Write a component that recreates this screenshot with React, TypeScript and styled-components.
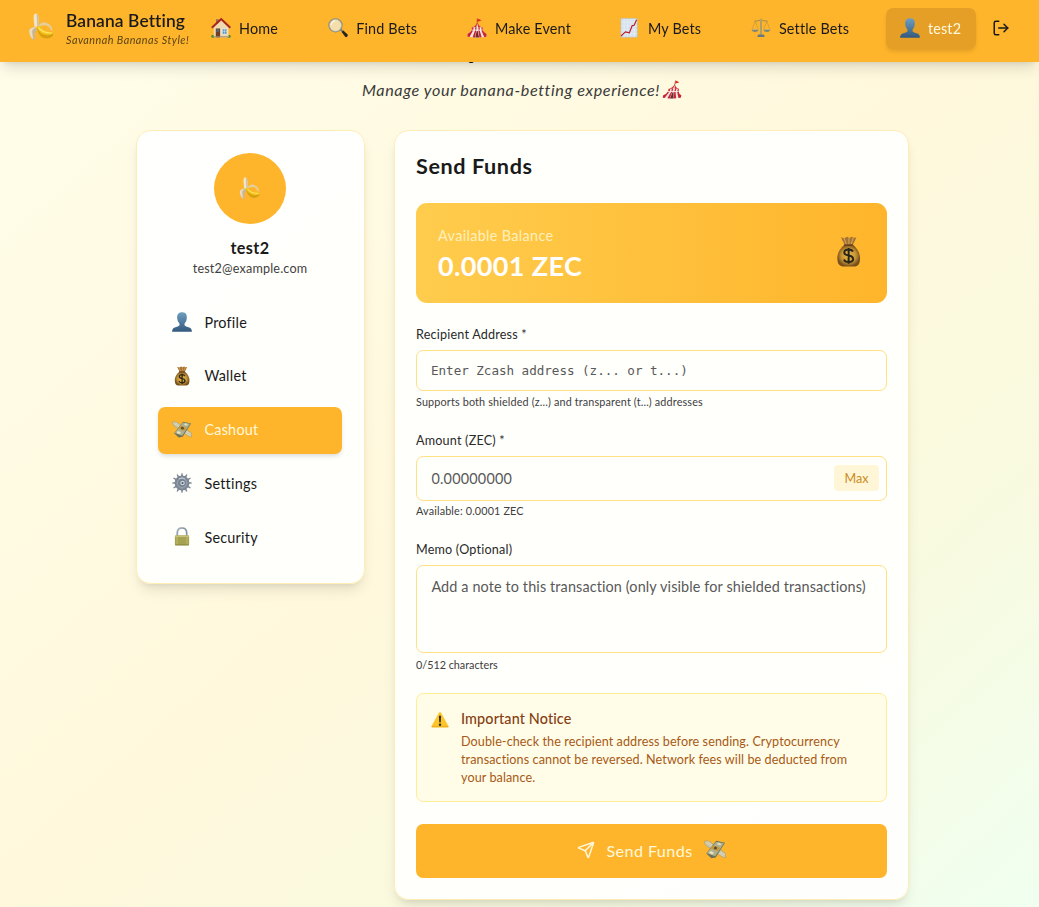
import React from 'react';
import styled, { createGlobalStyle, css } from 'styled-components';
import { LogOut, Send } from 'lucide-react';

const GlobalStyle = createGlobalStyle`
  *, *::before, *::after { box-sizing: border-box; }
  html { font-size: 14.4px; }
  body {
    margin: 0;
    height: 907px;
    overflow: hidden;
    font-family: Lato, 'Open Sans', sans-serif;
    color: #1a1a1a;
    background: linear-gradient(to bottom right, #fffdea 0%, #fff8dc 50%, #f8fae0 76%, #f0fff0 100%);
  }
  h1, h2, h3, p { margin: 0; font-weight: 400; }
  button, input, textarea { font: inherit; }
`;

type EmojiName =
  | 'banana' | 'house' | 'search' | 'tent' | 'chart' | 'scales' | 'person'
  | 'bag' | 'wings' | 'gear' | 'lock' | 'warning';

const EmojiSvg = styled.svg<{ $size: number; $skew?: boolean }>`
  display: block;
  flex: none;
  width: ${(p) => p.$size}px;
  height: ${(p) => p.$size}px;
  overflow: visible;
  ${(p) => p.$skew && css`transform: skewX(-12deg);`}
`;

const teeth = [0, 30, 60, 90, 120, 150, 180, 210, 240, 270, 300, 330];

const drawings: Record<EmojiName, React.ReactNode> = {
  banana: (
    <>
      <path d="M7.2 9.6 Q2.2 10.4 1.6 12.4 Q1.8 17 4.6 19.4 Q5.6 19.6 5.7 17.6 Q5.2 13 8.4 11Z" fill="#cbb595" />
      <path d="M6.8 10 Q3.6 11.4 3.6 13.4 L4.4 18.8 Q1.6 16.4 1.5 12.6 Q2.4 10 6.8 10Z" fill="#eadcbc" />
      <path d="M5.3 9.6 L4.7 3.2 Q4.8 .4 6.3 .3 Q7.9 .5 8.2 3 L8.5 9.4 Q6.8 10.8 5.3 9.6Z" fill="#f0e5c6" />
      <path d="M6.9 .6 Q8 1 8.2 3 L8.5 9.4 L7.3 10Z" fill="#cfc09e" />
      <path d="M8 9.3 Q10.4 6 13.2 6.7 Q17.8 8 18.1 12.3 Q17.6 13.1 17.2 12.4 Q15.6 8.6 12 8.8 Q10 9 8 9.9Z" fill="#e3cf9c" />
      <path d="M6.3 10.2 Q8.6 8.2 10.7 11 Q13.4 13.8 18 13.6 Q19.7 14.5 18.4 16.4 Q15.8 18.9 11.9 17.9 Q7.9 16.3 6.3 10.2Z" fill="#f3c11c" />
      <path d="M7 10.5 Q9 14.8 13.5 15.8 Q16.2 16.2 18.9 14.7 L18.4 16.4 Q15.8 18.9 11.9 17.9 Q7.9 16.3 7 10.5Z" fill="#d99f10" />
      <path d="M8.2 10.3 Q11 14.5 17.9 14.3" fill="none" stroke="#ffe566" strokeWidth=".8" />
    </>
  ),
  house: (
    <>
      <ellipse cx="2.4" cy="18.3" rx="2.2" ry="1.6" fill="#4c8d24" />
      <ellipse cx="17.6" cy="18.3" rx="2.2" ry="1.6" fill="#4c8d24" />
      <path d="M5 1.2h2.7v5H5z" fill="#9d6f53" />
      <path d="M2.7 9.2 10.4 2.2 17.5 9.4v10H2.7z" fill="#efd9b2" />
      <path d="M.8 9.7 10.2 1 19.3 9.7" fill="none" stroke="#a52720" strokeWidth="2" />
      <path d="M4.8 10.5h4.3v8.9H4.8z" fill="#6f4023" />
      <path d="M5.5 11.3H8v2.6H5.5z" fill="#506b80" />
      <path d="M11.2 10.8h4.8v5.5h-4.8z" fill="#5698c5" stroke="#fff4df" strokeWidth=".7" />
      <path d="M13.6 10.8v5.5M11.2 13.3H16" stroke="#e5edf0" strokeWidth=".5" />
      <path d="M2.7 18.8h14.8" stroke="#a48869" />
    </>
  ),
  search: (
    <>
      <path d="m11.8 12.3 1.5-1.5 2.1 2-1.5 1.5z" fill="#7d8280" />
      <path d="m13.6 14 1.7-1.6 4.4 4.1q.4 1.2-.6 2.2-.9.7-1.7.4z" fill="#27231f" />
      <circle cx="7.5" cy="7.3" r="6.5" fill="#f4deac" stroke="#85877b" strokeWidth="1.3" />
      <circle cx="7.5" cy="7.3" r="6" fill="none" stroke="#c9cdbf" strokeWidth=".6" />
      <path d="M3.1 7.3Q3.5 3.3 7.2 2.8" fill="none" stroke="#fff6d9" strokeWidth="1.2" />
    </>
  ),
  tent: (
    <>
      <path d="M10.2.5v5" stroke="#73452d" strokeWidth=".6" />
      <path d="M10.4.5 14.6 2.3 10.4 4z" fill="#e22a21" />
      <path d="M10.2 4.5Q8.9 8 5.5 9.5h9.6Q11.5 8 10.2 4.5Z" fill="#cf2b31" />
      <path d="m10.2 5.3-1 4.2h2z" fill="#f4e4e2" />
      <path d="M4.7 9.2h11v4h-11z" fill="#f3e8e8" />
      <path d="M4.7 9.2h1.8v4H4.7zm3.4 0h1.4v4H8.1zm3.3 0h1.4v4h-1.4zm3 0h1.3v4h-1.3z" fill="#ca2a31" />
      <path d="M4.6 12Q3.5 14.7.5 16v2.8l9.7.9 9.3-.9V16Q16.7 14.8 15.7 12z" fill="#eee2e3" />
      <path d="M4.7 12Q3.6 14.8.5 16v2.8l2 .2 3.8-7zm3.5 0-2.6 7.3 2.4.2L9.3 12zm3 0 1.2 7.5 2.3-.3-2.2-7.2zm3 0 3 7 2.3-.2V16Q16.7 14.8 15.7 12z" fill="#c8242e" />
      <path d="m9.7 13-1.4 6.6h3.8L10.7 13z" fill="#6f292f" />
      <path d="M4.6 12.1h11" stroke="#fff4e5" strokeWidth=".8" />
    </>
  ),
  chart: (
    <>
      <path d="M.9.5h16.3v18.7H.9z" fill="#d6e2ee" stroke="#abbaca" strokeWidth=".5" />
      <path d="M4.2.5v18.7M7.5.5v18.7M10.8.5v18.7M14.1.5v18.7M.9 4.2h16.3M.9 8h16.3M.9 11.8h16.3M.9 15.5h16.3" stroke="#eaf1f6" strokeWidth=".6" />
      <path d="m1 18 4.4-4.1 4 .9 2.7-7.1 2-.4 2.5-5.5" fill="none" stroke="#b92232" strokeWidth="1.2" strokeLinejoin="round" />
    </>
  ),
  scales: (
    <>
      <path d="m4.2 3.2-3 8m3-8 3 8m8.6-8-3 8m3-8 3 8" stroke="#a98c4c" strokeWidth=".5" />
      <path d="M3.5 3.1Q7 3.3 10 1.9q3 1.4 6.5 1.2" fill="none" stroke="#a58b4c" />
      <path d="M9.3 1h1.4v15.8H9.3z" fill="#8f957f" />
      <circle cx="10" cy="1.8" r="1.3" fill="#c7a350" />
      <path d="M.4 11.4h7.4Q7 14 4.1 14 1.2 14 .4 11.4zm11.8 0h7.4q-.8 2.6-3.7 2.6-2.9 0-3.7-2.6z" fill="#7c8778" />
      <path d="M.4 11.4h7.4m4.4 0h7.4" stroke="#d3bf80" strokeWidth=".5" />
      <path d="M7.5 16.5h5l1 1.3v1.3h-7v-1.3z" fill="#667780" />
    </>
  ),
  person: (
    <>
      <defs>
        <linearGradient id="person-blue" x1="0" y1="0" x2="0" y2="1">
          <stop stopColor="#6e9fc0" /><stop offset="1" stopColor="#34597d" />
        </linearGradient>
      </defs>
      <path d="M10 .3C6.7.3 5 2.5 5.1 5.8q.2 4 2.4 6v1.5q-1.1 1.4-4.8 2.2Q.2 16.2.1 19.7h19.8q-.1-3.5-2.6-4.2-3.7-.8-4.8-2.2v-1.5q2.2-2 2.4-6Q15 2.5 13.3 1.1 11.9.3 10 .3Z" fill="url(#person-blue)" />
    </>
  ),
  bag: (
    <>
      <defs>
        <radialGradient id="bag-gold">
          <stop stopColor="#e8bd47" /><stop offset=".65" stopColor="#c69335" /><stop offset="1" stopColor="#79501c" />
        </radialGradient>
      </defs>
      <path d="m5.1.8 2.1.6 2-.9 1.2.8 1.8-.8 1.1.7 1.8-.3-2.6 5.6H7.9z" fill="#a77335" />
      <path d="m7.1 1.4 1.6 4.2M10.3 1.3v4M13 1.2l-1.2 4" stroke="#dfad58" strokeWidth=".6" />
      <path d="M7.4 5.7h5.5q4.2 3.5 4.5 8.1.3 5.4-3 5.8H5.9q-3.3-.4-3.1-5.8.3-4.6 4.6-8.1Z" fill="url(#bag-gold)" />
      <path d="M7.1 5.9h5.7" stroke="#6c4520" strokeWidth="1.1" />
      <path d="M12.8 10.1Q12.3 8.7 10.1 8.7q-2.8 0-2.8 1.9 0 1.5 2.8 2t2.9 2.2q0 2-2.9 2-2.5 0-3-1.7m3-7.4v10.2" fill="none" stroke="#272519" strokeWidth="1.25" />
    </>
  ),
  wings: (
    <>
      <path d="M5.9 8.4Q1 6.9.2 2q2 .1 3.2-.5Q6.5 2.6 8.6 5z" fill="#c8c3a6" stroke="#8d886c" strokeWidth=".35" />
      <path d="m1.2 3 6 3.8M3.3 2.2 7.7 6" stroke="#e6dfbe" strokeWidth=".65" />
      <path d="m14.1 9.2 5.2 3.5q.2 2.2.5 4.3-2.9-.2-5.1-1.9l-3.2-2.5z" fill="#c8c3a6" stroke="#8d886c" strokeWidth=".35" />
      <path d="m13.4 11 5.7 3.3m-6.4-2 5.7 3.8" stroke="#e5ddbc" strokeWidth=".7" />
      <path d="m2.1 13.2 9-11.5 8 1.7-8.4 13.4-4 .7z" fill="#6a7158" />
      <path d="m2.5 12.9 8.6-10.3 7.1 1.2-8 11.9z" fill="#aeb08d" />
      <path d="m6.3 8.3 6 2.9 2.3-3.2-6.2-2.4z" fill="#c89735" />
      <circle cx="10.4" cy="8.2" r="1.4" fill="#594e37" />
      <ellipse cx="6.8" cy="12.5" rx="2" ry="1.2" fill="#e8e2c8" transform="rotate(15 6.8 12.5)" />
      <ellipse cx="13.8" cy="4.5" rx="1.8" ry="1" fill="#e2dcc2" transform="rotate(15 13.8 4.5)" />
    </>
  ),
  gear: (
    <>
      {teeth.map((a) => (
        <path key={a} d="M9 4 9.4.2h1.2L11 4z" fill="#7d8592" transform={`rotate(${a} 10 10)`} />
      ))}
      <circle cx="10" cy="10" r="6.4" fill="none" stroke="#7c8795" strokeWidth="2" />
      <circle cx="10" cy="10" r="5.3" fill="#a3adba" stroke="#5a6472" strokeWidth=".5" />
      <circle cx="10" cy="10" r="4" fill="#77828f" />
      <circle cx="10.5" cy="10" r="2.3" fill="#c9d3dc" />
      <circle cx="10.5" cy="10" r="1" fill="#4a5460" />
      <path d="M7 5.8Q10 3.9 13 5.8" fill="none" stroke="#d0d6de" strokeWidth=".8" />
    </>
  ),
  lock: (
    <>
      <path d="M5.3 9V6.1Q5.3 1 10 1t4.7 5.1V9" fill="none" stroke="#8796a4" strokeWidth="1.7" />
      <path d="M4.9 8.8V6Q5 1.3 9.8.8" fill="none" stroke="#c9d2d9" strokeWidth=".5" />
      <rect x="2.9" y="8.2" width="14.2" height="10" rx="1" fill="#a5a251" />
      <path d="M3 9.2h14" stroke="#d6d18c" strokeWidth="1" />
      <path d="M5 10v7.8m10-7.8v7.8" stroke="#bab665" strokeWidth="1.3" />
      <path d="M3.2 18h13.6" stroke="#77742f" strokeWidth=".7" />
    </>
  ),
  warning: (
    <>
      <path d="M9 1.7Q10 .5 11 1.7l8.4 15.1q.6 1.3-.9 1.5H1.5Q0 18.1.6 16.8Z" fill="#fcc52b" />
      <path d="M.6 17.4h18.8" stroke="#dca519" strokeWidth=".8" />
      <path d="M8.8 5.2h2.4l-.4 7.7H9.2z" fill="#342c1c" />
      <circle cx="10" cy="15.3" r="1.4" fill="#342c1c" />
    </>
  ),
};

const Emoji = ({ name, size = 20, skew }: { name: EmojiName; size?: number; skew?: boolean }) => (
  <EmojiSvg viewBox="0 0 20 20" $size={size} $skew={skew} aria-hidden="true">
    {drawings[name]}
  </EmojiSvg>
);

const Header = styled.header`
  position: fixed;
  inset: 0 0 auto 0;
  z-index: 10;
  display: flex;
  align-items: flex-start;
  height: 62px;
  padding: 8px 28px 0 27px;
  background: #ffb52b;
  box-shadow: 0 9px 14px -3px rgba(0, 0, 0, 0.12), 0 4px 6px -4px rgba(0, 0, 0, 0.12);
`;

const Brand = styled.a`
  display: flex;
  gap: 11px;
  width: 169.6px;
  padding-top: 5px;
`;

const BrandText = styled.div`
  margin-top: -1px;
  white-space: nowrap;
`;

const BrandName = styled.div`
  font-size: 17.4px;
  font-weight: 600;
  line-height: 18px;
  letter-spacing: 0.11px;
`;

const Tagline = styled.div`
  margin-top: 2px;
  font-size: 10.8px;
  font-style: italic;
  line-height: 16px;
  letter-spacing: 0.46px;
  color: #5a4415;
`;

const Nav = styled.nav`
  display: flex;
  gap: 21.6px;
`;

const NavItem = styled.a<{ $width: number; $active?: boolean }>`
  display: flex;
  align-items: center;
  gap: 8px;
  width: ${(p) => p.$width}px;
  height: 41px;
  padding: 0 0 1px 14.4px;
  border-radius: 7px;
  font-size: 14.4px;
  letter-spacing: 0.17px;
  white-space: nowrap;
  ${(p) => p.$active && css`
    color: #fff8dc;
    background: #e69f26;
    box-shadow: 0 3px 5px -1px rgba(0, 0, 0, 0.14);
  `}
`;

const LogoutButton = styled.button`
  display: flex;
  align-items: center;
  height: 41px;
  margin-left: 16px;
  padding: 0 0 1px;
  border: 0;
  background: none;
  color: #1a1a1a;
`;

const Page = styled.main`
  width: 773px;
  margin-left: 136px;
  padding-top: 24px;
`;

const PageTitle = styled.h1`
  font-size: 32px;
  font-weight: 700;
  line-height: 43px;
  letter-spacing: 0.4px;
  text-align: center;
`;

const PageSubtitle = styled.p`
  display: flex;
  align-items: center;
  justify-content: center;
  gap: 4px;
  height: 44px;
  margin-bottom: 19px;
  font-size: 16.2px;
  font-style: italic;
  letter-spacing: 0.6px;
  color: #3a3a3a;
  white-space: nowrap;
`;

const Columns = styled.div`
  display: grid;
  grid-template-columns: 229px 515px;
  justify-content: space-between;
  align-items: start;
`;

const Card = styled.section`
  border: 1px solid #ffedb3;
  border-radius: 14.4px;
  background: rgba(255, 255, 255, 0.9);
  box-shadow: 0 9px 14px -3px rgba(0, 0, 0, 0.1), 0 4px 6px -4px rgba(0, 0, 0, 0.1);
`;

const Sidebar = styled(Card)`
  height: 454px;
  padding: 22px 22px 0 21px;
`;

const Profile = styled.div`
  display: flex;
  flex-direction: column;
  align-items: center;
  height: 146px;
`;

const Avatar = styled.div`
  display: flex;
  align-items: center;
  justify-content: center;
  width: 72px;
  height: 71px;
  padding-right: 2px;
  border-radius: 50%;
  background: #ffb52b;
`;

const UserName = styled.h3`
  margin-top: 13px;
  font-size: 16.2px;
  font-weight: 700;
  line-height: 22px;
  letter-spacing: 0.35px;
`;

const Email = styled.p`
  font-size: 12.6px;
  line-height: 19px;
  letter-spacing: 0.18px;
  color: #3f3f3f;
`;

const Menu = styled.nav`
  display: flex;
  flex-direction: column;
  gap: 6.8px;
`;

const MenuItem = styled.a<{ $active?: boolean }>`
  display: flex;
  align-items: center;
  gap: 12.4px;
  height: 47px;
  padding: 0 0 1px 14px;
  border-radius: 7.2px;
  font-size: 14.4px;
  letter-spacing: 0.24px;
  ${(p) => p.$active && css`
    color: #fff8dc;
    background: #ffb52b;
    box-shadow: 0 3px 5px -1px rgba(0, 0, 0, 0.15);
  `}
`;

const Content = styled(Card)`
  height: 770px;
  padding: 21px;
`;

const ContentTitle = styled.h2`
  height: 51px;
  font-size: 21.6px;
  font-weight: 700;
  line-height: 28px;
  letter-spacing: 0.6px;
`;

const Balance = styled.div`
  display: flex;
  align-items: center;
  justify-content: space-between;
  height: 100px;
  padding: 0 23px 0 22px;
  border-radius: 11px;
  color: #fff;
  background: linear-gradient(to right, #ffcc4d, #ffb52b);
`;

const BalanceIcon = styled.div`
  padding-bottom: 3px;
`;

const BalanceLabel = styled.p`
  margin-top: 3px;
  font-size: 14.4px;
  line-height: 22px;
  letter-spacing: 0.35px;
  color: #fff0bd;
`;

const BalanceAmount = styled.p`
  margin-top: 1px;
  font-size: 27px;
  font-weight: 700;
  line-height: 36px;
  letter-spacing: 0.35px;
`;

const Label = styled.label`
  display: block;
  margin-top: 23px;
  margin-bottom: 6px;
  font-size: 12.6px;
  line-height: 18px;
  letter-spacing: 0.2px;
  color: #2a2a2a;
`;

const fieldStyle = css`
  display: block;
  width: 100%;
  padding: 0 14px;
  border: 1px solid #ffe082;
  border-radius: 7.2px;
  outline: 0;
  background: transparent;
  color: #1a1a1a;
  &::placeholder { color: #595959; opacity: 1; }
`;

const AddressInput = styled.input`
  ${fieldStyle}
  height: 41px;
  font-family: 'DejaVu Sans Mono', monospace;
  font-size: 12.6px;
  letter-spacing: -0.03px;
`;

const AmountBox = styled.div`
  display: flex;
  align-items: center;
  height: 45px;
  padding: 0 7px 1px 0;
  border: 1px solid #ffe082;
  border-radius: 7.2px;
`;

const AmountInput = styled.input`
  ${fieldStyle}
  border: 0;
  padding-left: 14.4px;
  font-size: 14.4px;
  letter-spacing: 0.22px;
`;

const MaxButton = styled.button`
  flex: none;
  width: 45px;
  height: 26px;
  padding: 0;
  border: 0;
  border-radius: 4px;
  font-size: 12.6px;
  color: #cc8c1c;
  background: #fff6d8;
`;

const Memo = styled.textarea`
  ${fieldStyle}
  height: 88px;
  padding: 10px 10px 0 14.4px;
  resize: none;
  font-size: 14.4px;
  line-height: 21.6px;
  letter-spacing: 0.13px;
`;

const Hint = styled.p<{ $top: number; $tight?: boolean }>`
  margin-top: ${(p) => p.$top}px;
  font-size: 10.8px;
  line-height: 15px;
  letter-spacing: ${(p) => (p.$tight ? 0 : 0.16)}px;
  color: #404040;
`;

const AmountHint = styled(Hint)`
  margin-bottom: 23px;
`;

const Notice = styled.div`
  display: flex;
  gap: 12px;
  height: 109px;
  margin-top: 21px;
  padding: 14px;
  border: 1px solid #ffee94;
  border-radius: 7.2px;
  background: #fffce8;
`;

const NoticeIcon = styled.div`
  padding-top: 3px;
`;

const NoticeTitle = styled.h3`
  font-size: 14.4px;
  font-weight: 500;
  line-height: 21px;
  letter-spacing: 0.12px;
  color: #854011;
`;

const NoticeText = styled.p`
  margin-top: 4px;
  font-size: 12.6px;
  line-height: 18px;
  letter-spacing: 0.09px;
  color: #a75a15;
  white-space: nowrap;
`;

const SubmitButton = styled.button`
  display: flex;
  align-items: center;
  justify-content: center;
  gap: 11px;
  width: 100%;
  height: 54px;
  margin-top: 22px;
  padding: 0 0 2px;
  border: 0;
  border-radius: 7.2px;
  font-size: 16.2px;
  letter-spacing: 0.4px;
  color: #fff8dc;
  background: #ffb52b;
`;

const navItems: { icon: EmojiName; label: string; width: number; active?: boolean }[] = [
  { icon: 'house', label: 'Home', width: 95.6 },
  { icon: 'search', label: 'Find Bets', width: 117.2 },
  { icon: 'tent', label: 'Make Event', width: 131.4 },
  { icon: 'chart', label: 'My Bets', width: 109.4 },
  { icon: 'scales', label: 'Settle Bets', width: 127.4 },
  { icon: 'person', label: 'test2', width: 90, active: true },
];

const menuItems: { icon: EmojiName; label: string; active?: boolean }[] = [
  { icon: 'person', label: 'Profile' },
  { icon: 'bag', label: 'Wallet' },
  { icon: 'wings', label: 'Cashout', active: true },
  { icon: 'gear', label: 'Settings' },
  { icon: 'lock', label: 'Security' },
];

export default function App() {
  return (
    <>
      <GlobalStyle />
      <Header>
        <Brand>
          <Emoji name="banana" size={28} />
          <BrandText>
            <BrandName>Banana Betting</BrandName>
            <Tagline>Savannah Bananas Style!</Tagline>
          </BrandText>
        </Brand>
        <Nav>
          {navItems.map((item) => (
            <NavItem key={item.label} $width={item.width} $active={item.active}>
              <Emoji name={item.icon} />
              {item.label}
            </NavItem>
          ))}
        </Nav>
        <LogoutButton aria-label="Log out">
          <LogOut size={18} />
        </LogoutButton>
      </Header>
      <Page>
        <PageTitle>My Account</PageTitle>
        <PageSubtitle>
          Manage your banana-betting experience!
          <Emoji name="tent" size={19} skew />
        </PageSubtitle>
        <Columns>
          <Sidebar>
            <Profile>
              <Avatar>
                <Emoji name="banana" size={23} />
              </Avatar>
              <UserName>test2</UserName>
              <Email>test2@example.com</Email>
            </Profile>
            <Menu>
              {menuItems.map((item) => (
                <MenuItem key={item.label} $active={item.active}>
                  <Emoji name={item.icon} />
                  {item.label}
                </MenuItem>
              ))}
            </Menu>
          </Sidebar>
          <Content>
            <ContentTitle>Send Funds</ContentTitle>
            <Balance>
              <div>
                <BalanceLabel>Available Balance</BalanceLabel>
                <BalanceAmount>0.0001 ZEC</BalanceAmount>
              </div>
              <BalanceIcon>
                <Emoji name="bag" size={31} />
              </BalanceIcon>
            </Balance>
            <Label>Recipient Address *</Label>
            <AddressInput placeholder="Enter Zcash address (z... or t...)" />
            <Hint $top={3}>Supports both shielded (z...) and transparent (t...) addresses</Hint>
            <Label>Amount (ZEC) *</Label>
            <AmountBox>
              <AmountInput placeholder="0.00000000" />
              <MaxButton>Max</MaxButton>
            </AmountBox>
            <AmountHint $top={2}>Available: 0.0001 ZEC</AmountHint>
            <Label>Memo (Optional)</Label>
            <Memo placeholder="Add a note to this transaction (only visible for shielded transactions)" />
            <Hint $top={4} $tight>0/512 characters</Hint>
            <Notice>
              <NoticeIcon>
                <Emoji name="warning" size={18} />
              </NoticeIcon>
              <div>
                <NoticeTitle>Important Notice</NoticeTitle>
                <NoticeText>
                  Double-check the recipient address before sending. Cryptocurrency
                  <br />
                  transactions cannot be reversed. Network fees will be deducted from
                  <br />
                  your balance.
                </NoticeText>
              </div>
            </Notice>
            <SubmitButton>
              <Send size={18} />
              Send Funds
              <Emoji name="wings" size={22} />
            </SubmitButton>
          </Content>
        </Columns>
      </Page>
    </>
  );
}
